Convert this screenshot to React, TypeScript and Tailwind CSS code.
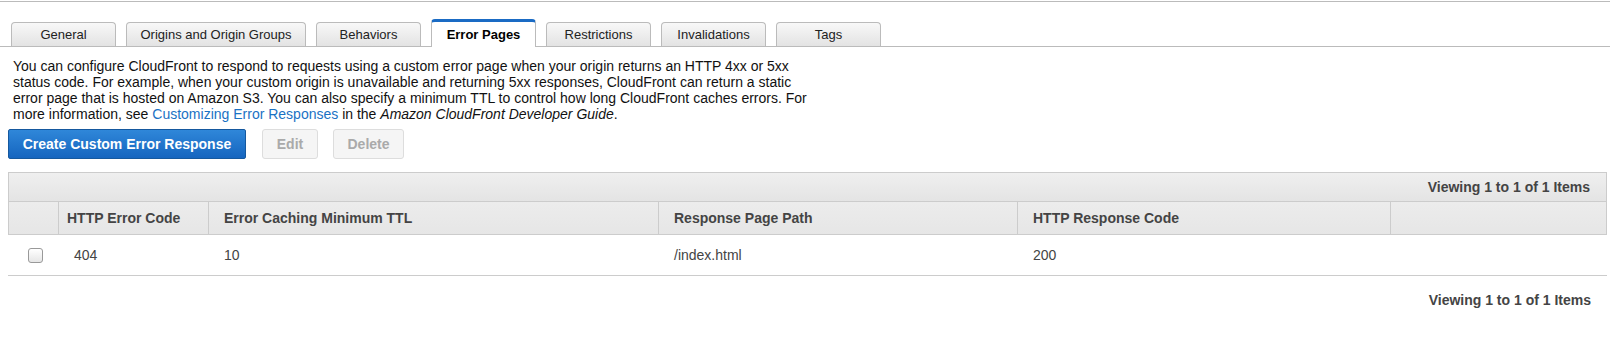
import React from "react"

const tabs = [
  { label: "General", width: "w-[105px]" },
  { label: "Origins and Origin Groups", width: "w-[180px]" },
  { label: "Behaviors", width: "w-[105px]" },
  { label: "Error Pages", width: "w-[105px]", active: true },
  { label: "Restrictions", width: "w-[105px]" },
  { label: "Invalidations", width: "w-[105px]" },
  { label: "Tags", width: "w-[105px]" },
]

const rows = [{ code: "404", ttl: "10", path: "/index.html", response: "200" }]

function Tab({ label, width, active }: { label: string; width: string; active?: boolean }) {
  if (active) {
    return (
      <div
        className={`${width} h-[28px] -mb-px flex items-center justify-center rounded-t-[4px] border-x border-[#bbb] border-t-[3px] border-t-[#1a6bc4] bg-white text-[13px] font-bold text-black`}
      >
        {label}
      </div>
    )
  }
  return (
    <div
      className={`${width} h-[24px] flex items-center justify-center rounded-t-[4px] border border-b-0 border-[#bbb] bg-linear-to-b from-[#f8f8f8] to-[#e3e3e3] text-[13px] text-[#222]`}
    >
      {label}
    </div>
  )
}

export default function App() {
  return (
    <div className="w-[1615px] h-[343px] bg-white font-['Liberation_Sans',Arial,sans-serif] text-[#222]">
      <div className="mt-px w-[1610px] border-t border-[#bbb]">
        <div className="flex items-end gap-[10px] pl-[11px] h-[45px] border-b border-[#bbb]">
          {tabs.map((t) => (
            <Tab key={t.label} {...t} />
          ))}
        </div>
      </div>

      <p className="ml-[13px] mt-[11px] text-[14px] leading-[16px] text-[#111]">
        You can configure CloudFront to respond to requests using a custom error page when your
        origin returns an HTTP 4xx or 5xx
        <br />
        status code. For example, when your custom origin is unavailable and returning 5xx
        responses, CloudFront can return a static
        <br />
        error page that is hosted on Amazon S3. You can also specify a minimum TTL to control how
        long CloudFront caches errors. For
        <br />
        more information, see <span className="text-[#1a72c4]">Customizing Error Responses</span>{" "}
        in the <i>Amazon CloudFront Developer Guide</i>.
      </p>

      <div className="ml-[8px] mt-[7px] flex">
        <button className="w-[238px] h-[30px] rounded-[2px] border border-[#15589e] bg-linear-to-b from-[#2f87d9] to-[#1565bf] text-[14px] font-bold text-white">
          Create Custom Error Response
        </button>
        <button className="ml-[16px] w-[56px] h-[30px] rounded-[3px] border border-[#ddd] bg-[#f5f5f5] text-[14px] font-bold text-[#aaa]">
          Edit
        </button>
        <button className="ml-[15px] w-[71px] h-[30px] rounded-[3px] border border-[#ddd] bg-[#f5f5f5] text-[14px] font-bold text-[#aaa]">
          Delete
        </button>
      </div>

      <div className="ml-[8px] mt-[13px] w-[1599px] text-[14px] text-[#444]">
        <div className="border border-[#ccc]">
          <div className="h-[29px] flex items-center justify-end pr-[16px] border-b border-[#ccc] bg-linear-to-b from-[#efefef] to-[#e4e4e4] font-bold">
            Viewing 1 to 1 of 1 Items
          </div>
          <div className="grid grid-cols-[49px_150px_450px_359px_373px_216px] h-[32px] items-stretch bg-linear-to-b from-[#ececec] to-[#e6e6e6] font-bold">
            <div />
            <div className="flex items-center pl-[8px] border-l border-[#ccc]">HTTP Error Code</div>
            <div className="flex items-center pl-[15px] border-l border-[#ccc]">
              Error Caching Minimum TTL
            </div>
            <div className="flex items-center pl-[15px] border-l border-[#ccc]">
              Response Page Path
            </div>
            <div className="flex items-center pl-[15px] border-l border-[#ccc]">
              HTTP Response Code
            </div>
            <div className="border-l border-[#ccc]" />
          </div>
        </div>
        {rows.map((r) => (
          <div
            key={r.code}
            className="grid grid-cols-[50px_150px_450px_359px_373px_217px] h-[41px] items-center border-b border-[#ccc]"
          >
            <div className="pl-[20px]">
              <div className="w-[15px] h-[15px] rounded-[3px] border border-[#999] bg-linear-to-b from-white to-[#e6e6e6]" />
            </div>
            <div className="pl-[16px]">{r.code}</div>
            <div className="pl-[16px]">{r.ttl}</div>
            <div className="pl-[16px]">{r.path}</div>
            <div className="pl-[16px]">{r.response}</div>
            <div />
          </div>
        ))}
      </div>

      <div className="mt-[16px] w-[1607px] flex justify-end pr-[16px] text-[14px] leading-[16px] font-bold text-[#444]">
        Viewing 1 to 1 of 1 Items
      </div>
    </div>
  )
}
